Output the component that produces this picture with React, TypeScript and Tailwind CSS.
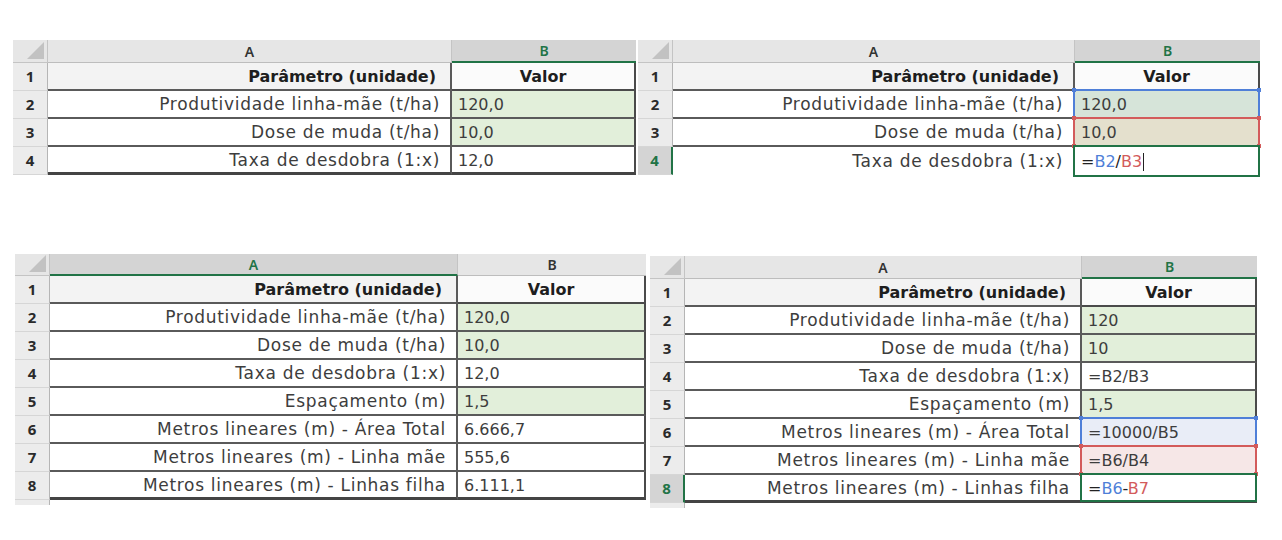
import React from 'react';

type Mark = 'blue' | 'red' | 'green';

type Row = {
  label: string;
  value: React.ReactNode;
  fill?: string;
  mark?: Mark;
};

type TableProps = {
  cols: string; // grid template
  headH: string;
  selCol?: 'A' | 'B';
  selRow?: number;
  rows: Row[];
  tail?: boolean;
  openBottom?: boolean;
};

const markBorder: Record<Mark, string> = {
  blue: 'border-[#4f7fd8]',
  red: 'border-[#d35b5b]',
  green: 'border-[#217346]',
};

const markDot: Record<Mark, string> = {
  blue: 'bg-[#4f7fd8]',
  red: 'bg-[#d35b5b]',
  green: 'bg-[#217346]',
};

const Blue = ({ children }: { children: React.ReactNode }) => <span className="text-[#4f7fd8]">{children}</span>;
const Red = ({ children }: { children: React.ReactNode }) => <span className="text-[#d35b5b]">{children}</span>;

function MarkBox({ mark }: { mark: Mark }) {
  return (
    <div className={`pointer-events-none absolute -left-[2px] -top-[2px] -right-[2px] -bottom-[2px] border-2 ${markBorder[mark]}`}>
      {mark !== 'green' && (
        <>
          <span className={`absolute -left-[3px] -top-[3px] w-[4px] h-[4px] ${markDot[mark]}`} />
          <span className={`absolute -right-[3px] -top-[3px] w-[4px] h-[4px] ${markDot[mark]}`} />
          <span className={`absolute -left-[3px] -bottom-[3px] w-[4px] h-[4px] ${markDot[mark]}`} />
          <span className={`absolute -right-[3px] -bottom-[3px] w-[4px] h-[4px] ${markDot[mark]}`} />
        </>
      )}
    </div>
  );
}

function Sheet({ cols, headH, selCol, selRow, rows, tail, openBottom }: TableProps) {
  const colHead = (letter: 'A' | 'B') =>
    selCol === letter
      ? 'bg-[#d4d4d4] text-[#217346] border-b-2 border-b-[#217346]'
      : 'bg-[#e6e6e6] text-[#333] border-b border-b-[#bdbdbd]';

  return (
    <div className="flex flex-col">
      <div className="grid" style={{ gridTemplateColumns: cols }}>
        {/* corner */}
        <div className={`${headH} bg-[#e6e6e6] border-r border-b border-[#c4c4c4] relative`}>
          <div className="absolute right-[3px] bottom-[3px] w-0 h-0 border-l-[17px] border-l-transparent border-b-[17px] border-b-[#c2c2c2]" />
        </div>
        <div className={`${headH} ${colHead('A')} border-r border-r-[#c4c4c4] flex items-center justify-center font-['Noto_Sans'] text-[14px] font-semibold`}>A</div>
        <div className={`${headH} ${colHead('B')} flex items-center justify-center font-['Noto_Sans'] text-[14px] font-semibold`}>B</div>

        {/* row 1 */}
        <div className="h-[28px] bg-[#ececec] border-r border-r-[#b5b5b5] border-b border-b-[#d6d6d6] flex items-center justify-center font-['Noto_Sans'] text-[15px] font-bold text-[#2a2a2a]">1</div>
        <div className="h-[28px] bg-[#f3f3f3] border-b-2 border-r-2 border-[#5a5a5a] flex items-center justify-end pr-[14px] pt-[2px] font-['DejaVu_Sans'] text-[16px] font-bold text-[#1e1e1e]">
          Parâmetro (unidade)
        </div>
        <div className="h-[28px] bg-[#fbfbfb] border-b-2 border-r-2 border-[#4a4a4a] flex items-center justify-center pt-[2px] font-['DejaVu_Sans'] text-[16px] font-bold text-[#1e1e1e]">
          Valor
        </div>

        {rows.map((r, i) => {
          const n = i + 2;
          const sel = selRow === n;
          const last = i === rows.length - 1;
          return (
            <React.Fragment key={n}>
              <div
                className={`h-[28px] flex items-center justify-center font-['Noto_Sans'] text-[15px] font-bold border-b border-b-[#d6d6d6] ${
                  sel ? 'bg-[#d4d4d4] text-[#217346] border-r-2 border-r-[#217346]' : 'bg-[#ececec] text-[#2a2a2a] border-r border-r-[#b5b5b5]'
                }`}
              >
                {n}
              </div>
              <div
                className={`h-[28px] bg-white border-r-2 border-r-[#5a5a5a] flex items-center justify-end pr-[10px] pt-[2px] font-['DejaVu_Sans'] text-[17px] tracking-[0.7px] text-[#3d3d3d] whitespace-nowrap ${
                  last && openBottom ? '' : last ? 'border-b-[3px] border-b-[#444]' : 'border-b-2 border-b-[#5a5a5a]'
                }`}
              >
                {r.label}
              </div>
              <div
                className={`relative h-[28px] ${r.fill ?? 'bg-white'} border-r-2 border-r-[#4a4a4a] flex items-center pl-[6px] pt-[2px] font-['DejaVu_Sans'] text-[16px] text-[#3d3d3d] whitespace-nowrap ${
                  last && openBottom ? '' : last ? 'border-b-[3px] border-b-[#444]' : 'border-b-2 border-b-[#5a5a5a]'
                }`}
              >
                {r.value}
                {r.mark && <MarkBox mark={r.mark} />}
              </div>
            </React.Fragment>
          );
        })}
      </div>
      {tail && (
        <div className="grid h-[5px]" style={{ gridTemplateColumns: cols }}>
          <div className="bg-[#ececec] border-r border-r-[#b5b5b5]" />
          <div />
          <div />
        </div>
      )}
    </div>
  );
}

const green = 'bg-[#e2efda]';

export default function App() {
  return (
    <div className="w-[1282px] h-[540px] bg-white overflow-hidden">
      {/* top row */}
      <div className="flex items-start gap-[2px] pl-[13px] pt-[40px]">
        <Sheet
          cols="35px 404px 184px"
          headH="h-[23px]"
          selCol="B"
          rows={[
            { label: 'Produtividade linha-mãe (t/ha)', value: '120,0', fill: green },
            { label: 'Dose de muda (t/ha)', value: '10,0', fill: green },
            { label: 'Taxa de desdobra (1:x)', value: '12,0' },
          ]}
        />
        <Sheet
          cols="35px 402px 185px"
          headH="h-[23px]"
          selCol="B"
          selRow={4}
          openBottom
          rows={[
            { label: 'Produtividade linha-mãe (t/ha)', value: '120,0', fill: 'bg-[#d6e4d9]', mark: 'blue' },
            { label: 'Dose de muda (t/ha)', value: '10,0', fill: 'bg-[#e4e0cd]', mark: 'red' },
            {
              label: 'Taxa de desdobra (1:x)',
              value: (
                <span className="flex items-center text-[#222]">
                  =<Blue>B2</Blue>/<Red>B3</Red>
                  <span className="ml-[1px] w-px h-[18px] bg-[#222]" />
                </span>
              ),
              mark: 'green',
            },
          ]}
        />
      </div>

      {/* bottom row */}
      <div className="flex items-start gap-[4px] pl-[15px] pt-[79px]">
        <Sheet
          cols="35px 408px 188px"
          headH="h-[22px]"
          selCol="A"
          tail
          rows={[
            { label: 'Produtividade linha-mãe (t/ha)', value: '120,0', fill: green },
            { label: 'Dose de muda (t/ha)', value: '10,0', fill: green },
            { label: 'Taxa de desdobra (1:x)', value: '12,0' },
            { label: 'Espaçamento (m)', value: '1,5', fill: green },
            { label: 'Metros lineares (m) - Área Total', value: '6.666,7' },
            { label: 'Metros lineares (m) - Linha mãe', value: '555,6' },
            { label: 'Metros lineares (m) - Linhas filha', value: '6.111,1' },
          ]}
        />
        <div className="mt-[2px]">
          <Sheet
            cols="35px 397px 175px"
            headH="h-[23px]"
            selCol="B"
            selRow={8}
            tail
            rows={[
              { label: 'Produtividade linha-mãe (t/ha)', value: '120', fill: green },
              { label: 'Dose de muda (t/ha)', value: '10', fill: green },
              { label: 'Taxa de desdobra (1:x)', value: '=B2/B3' },
              { label: 'Espaçamento (m)', value: '1,5', fill: green },
              { label: 'Metros lineares (m) - Área Total', value: '=10000/B5', fill: 'bg-[#e9edf7]', mark: 'blue' },
              { label: 'Metros lineares (m) - Linha mãe', value: '=B6/B4', fill: 'bg-[#f6e7e7]', mark: 'red' },
              {
                label: 'Metros lineares (m) - Linhas filha',
                value: (
                  <span className="text-[#222]">
                    =<Blue>B6</Blue>-<Red>B7</Red>
                  </span>
                ),
                mark: 'green',
              },
            ]}
          />
        </div>
      </div>
    </div>
  );
}
